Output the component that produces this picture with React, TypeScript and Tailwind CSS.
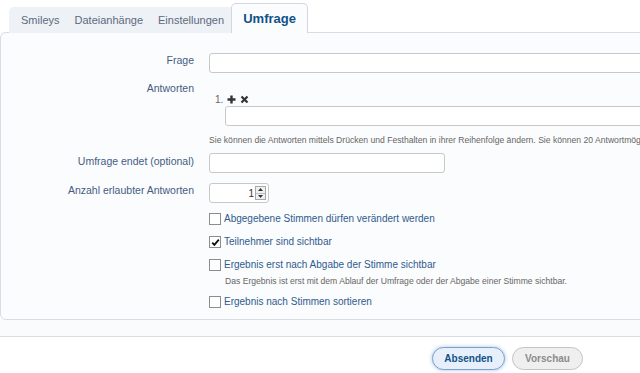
import React from "react";

const tabs = ["Smileys", "Dateianhänge", "Einstellungen"];

function Checkbox({ checked = false }: { checked?: boolean }) {
  return (
    <span className="inline-flex h-[12px] w-[12px] shrink-0 items-center justify-center border border-[#8d8d8d] bg-white">
      {checked && (
        <svg width="9" height="9" viewBox="0 0 9 9">
          <path d="M1.2 4.6 L3.4 6.9 L7.8 1.6" fill="none" stroke="#111" strokeWidth="1.8" />
        </svg>
      )}
    </span>
  );
}

function CheckRow({ label, checked, className = "" }: { label: string; checked?: boolean; className?: string }) {
  return (
    <div className={`flex items-center gap-[3px] h-[14px] ${className}`}>
      <Checkbox checked={checked} />
      <span className="text-[10px] text-[#2f5b8f] leading-[14px]">{label}</span>
    </div>
  );
}

export default function App() {
  return (
    <div
      className="w-[640px] h-[373px] overflow-hidden bg-white"
      style={{ fontFamily: '"Liberation Sans", Arial, sans-serif' }}
    >
      {/* Tabs */}
      <div className="relative z-10 flex items-end pl-[9px] pt-[3px] -mb-px">
        <div className="flex h-[26px] items-center rounded-tl-[5px] bg-[#eef1f5] pl-[12px] pr-[7px] gap-[15px]">
          {tabs.map((t) => (
            <span key={t} className="text-[11px] text-[#5c6a80]">
              {t}
            </span>
          ))}
        </div>
        <div className="flex h-[30px] w-[77px] items-center justify-center rounded-t-[5px] border border-b-0 border-[#d4d8dd] bg-[#fbfcfd]">
          <span className="text-[13px] font-bold text-[#105289]">Umfrage</span>
        </div>
      </div>

      {/* Panel + strip */}
      <div className="w-[680px] bg-[#fafbfc] border-b border-[#d9dde2]">
        <div className="h-[288px] overflow-hidden rounded-[6px] border border-[#d9dde2] bg-[#fbfcfd] pt-[20px]">
          {/* Frage */}
          <div className="flex">
            <div className="w-[193px] shrink-0 text-right text-[10.5px] leading-[14px] text-[#445d84]">Frage</div>
            <div className="ml-[15px] h-[20px] flex-1 rounded-[3px] border border-[#c8c8c8] bg-white" />
          </div>

          {/* Antworten */}
          <div className="flex mt-[8px]">
            <div className="w-[193px] shrink-0 text-right text-[10.5px] leading-[14px] text-[#445d84]">Antworten</div>
            <div className="ml-[15px] min-w-0 flex-1 pt-[12px]">
              <div className="flex items-center h-[13px] pl-[6px] gap-[2px]">
                <span className="text-[10px] text-[#666] mr-[2px]">1.</span>
                <svg width="9" height="9" viewBox="0 0 9 9">
                  <path d="M3.3 0.5h2.4v2.8h2.8v2.4h-2.8v2.8h-2.4v-2.8h-2.8v-2.4h2.8z" fill="#333" />
                </svg>
                <svg width="9" height="9" viewBox="0 0 9 9" className="ml-[2px]">
                  <path d="M1.5 1.5 L7.5 7.5 M7.5 1.5 L1.5 7.5" stroke="#333" strokeWidth="2.2" />
                </svg>
              </div>
              <div className="ml-[16px] h-[20px] rounded-[3px] border border-[#c8c8c8] bg-white" />
              <div className="mt-[7px] whitespace-nowrap text-[8.6px] leading-[14px] text-[#666]">
                Sie können die Antworten mittels Drücken und Festhalten in ihrer Reihenfolge ändern. Sie können 20 Antwortmöglichkeiten angeben.
              </div>
            </div>
          </div>

          {/* Umfrage endet */}
          <div className="flex mt-[6px]">
            <div className="w-[193px] shrink-0 pt-[1px] text-right text-[10.5px] leading-[14px] text-[#445d84]">Umfrage endet (optional)</div>
            <div className="ml-[15px] h-[20px] w-[236px] rounded-[3px] border border-[#c8c8c8] bg-white" />
          </div>

          {/* Anzahl */}
          <div className="flex mt-[10px]">
            <div className="w-[193px] shrink-0 text-right text-[10.5px] leading-[14px] text-[#445d84]">Anzahl erlaubter Antworten</div>
            <div className="ml-[15px] flex h-[20px] w-[60px] items-center justify-end rounded-[3px] border border-[#c8c8c8] bg-white pr-[2px]">
              <span className="text-[10px] text-[#333] mr-[1px]">1</span>
              <div className="flex h-[14px] w-[11px] flex-col border border-[#a8a8a8] bg-[#f0f0f0]">
                <div className="flex flex-1 items-center justify-center border-b border-[#bdbdbd]">
                  <svg width="5" height="3" viewBox="0 0 5 3"><path d="M0 3 L2.5 0 L5 3z" fill="#333" /></svg>
                </div>
                <div className="flex flex-1 items-center justify-center">
                  <svg width="5" height="3" viewBox="0 0 5 3"><path d="M0 0 L2.5 3 L5 0z" fill="#333" /></svg>
                </div>
              </div>
            </div>
          </div>

          {/* Checkboxes */}
          <div className="ml-[208px]">
            <CheckRow className="mt-[9px]" label="Abgegebene Stimmen dürfen verändert werden" />
            <CheckRow className="mt-[9px]" label="Teilnehmer sind sichtbar" checked />
            <CheckRow className="mt-[9px]" label="Ergebnis erst nach Abgabe der Stimme sichtbar" />
            <div className="mt-[2px] pl-[16px] text-[8.6px] leading-[14px] text-[#666]">
              Das Ergebnis ist erst mit dem Ablauf der Umfrage oder der Abgabe einer Stimme sichtbar.
            </div>
            <CheckRow className="mt-[7px]" label="Ergebnis nach Stimmen sortieren" />
          </div>
        </div>
        <div className="h-[16px]" />
      </div>

      {/* Buttons */}
      <div className="flex gap-[7px] pl-[432px] pt-[10px]">
        <button className="h-[23px] w-[73px] rounded-full border border-[#7e9fc9] bg-[#e6effa] text-[10px] font-bold text-[#105289] shadow-[0_0_4px_#a7c6ec]">
          Absenden
        </button>
        <button className="h-[23px] w-[71px] rounded-full border border-[#c4c4c4] bg-[#efefef] text-[10px] font-bold text-[#8c8c8c]">
          Vorschau
        </button>
      </div>
    </div>
  );
}
